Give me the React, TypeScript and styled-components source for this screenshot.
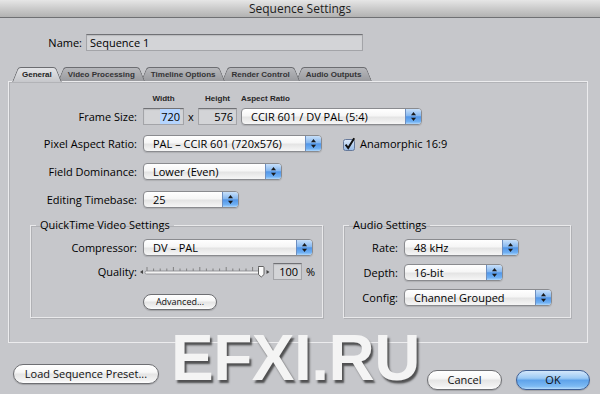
import React from 'react';
import styled, { createGlobalStyle } from 'styled-components';

const GlobalStyle = createGlobalStyle`
  html, body {
    margin: 0;
    padding: 0;
    background: #c6c7cb;
  }
  body {
    font-family: 'Open Sans', 'DejaVu Sans', sans-serif;
    color: #000;
  }
`;

const Window = styled.div`
  position: relative;
  width: 600px;
  height: 394px;
  overflow: hidden;
  background: #c6c7cb;
  display: flex;
  flex-direction: column;
`;

const TitleBar = styled.div`
  flex: none;
  height: 18px;
  box-sizing: border-box;
  border-bottom: 1px solid #6f7073;
  background: linear-gradient(#e6e6e6, #cbcbcb 50%, #b2b2b2);
  display: flex;
  align-items: center;
  justify-content: center;
  font-size: 12px;
  line-height: 17px;
  color: #1c1c1c;
`;

const Body = styled.div`
  display: flex;
  flex-direction: column;
  padding: 16px 10px 0 8px;
`;

const NameRow = styled.div`
  display: flex;
  align-items: center;
  gap: 4px;
  height: 17px;
`;

const Label = styled.div<{ $w: number }>`
  flex: none;
  width: ${p => p.$w}px;
  text-align: right;
  font-size: 11px;
  line-height: 15px;
  white-space: nowrap;
`;

const TextField = styled.div<{ $w: number; $right?: boolean }>`
  flex: none;
  width: ${p => p.$w}px;
  height: 17px;
  box-sizing: border-box;
  border: 1px solid #a3a4a8;
  border-top-color: #707175;
  background: #d3d4d7;
  box-shadow: inset 0 1px 1px rgba(0, 0, 0, 0.12);
  padding: 0 3px;
  font-size: 11px;
  line-height: 15px;
  text-align: ${p => (p.$right ? 'right' : 'left')};
  white-space: nowrap;
  overflow: hidden;
`;

const Selected = styled.span`
  background: #b5d5ff;
  padding-left: 1px;
`;

const TabBar = styled.div`
  position: relative;
  z-index: 1;
  display: flex;
  align-items: flex-start;
  height: 14px;
  margin-top: 16px;
  padding-left: 4px;
`;

const Tab = styled.div<{ $active?: boolean; $z: number }>`
  position: relative;
  z-index: ${p => p.$z};
  height: ${p => (p.$active ? 15 : 14)}px;
  padding: 0 10px;
  margin-right: -4px;
  font: bold 8px/15px 'Liberation Sans', Arial, sans-serif;
  color: ${p => (p.$active ? '#1e1e1e' : '#333335')};
  white-space: nowrap;

  &::before,
  &::after {
    content: '';
    position: absolute;
    top: 0;
    bottom: 0;
    z-index: -1;
    border-top: 1px solid #6c6d71;
    background: ${p =>
      p.$active
        ? 'linear-gradient(#e3e4e7, #c6c7cb)'
        : 'linear-gradient(#b6b7bb, #9a9b9f)'};
  }
  &::before {
    left: 0;
    right: 50%;
    border-left: 1px solid #6c6d71;
    border-top-left-radius: 3px;
    transform-origin: bottom;
    transform: skewX(-22deg);
  }
  &::after {
    left: 50%;
    right: 0;
    border-right: 1px solid #6c6d71;
    border-top-right-radius: 3px;
    transform-origin: bottom;
    transform: skewX(22deg);
  }
`;

const Panel = styled.div`
  width: 580px;
  height: 262px;
  box-sizing: border-box;
  border: 1px solid #ececee;
  box-shadow: inset 1px 1px 0 #b2b3b7;
  display: flex;
  flex-direction: column;
`;

const Row = styled.div<{ $top: number; $gap?: number }>`
  display: flex;
  align-items: center;
  gap: ${p => p.$gap ?? 6}px;
  margin-top: ${p => p.$top}px;
  min-height: 17px;
`;

const ColHead = styled.div<{ $w?: number; $left?: boolean }>`
  flex: none;
  width: ${p => (p.$w ? `${p.$w}px` : 'auto')};
  text-align: ${p => (p.$left ? 'left' : 'center')};
  font: bold 8px/10px 'Liberation Sans', Arial, sans-serif;
  color: #262626;
`;

const HeadRow = styled.div`
  display: flex;
  margin-top: 12px;
  height: 10px;
  padding-left: 134px;
`;

const Times = styled.span`
  flex: none;
  width: 6px;
  margin: 0 4px;
  text-align: center;
  font-size: 11px;
  line-height: 15px;
`;

const Gap = styled.span<{ $w: number }>`
  flex: none;
  width: ${p => p.$w}px;
`;

const PopupBox = styled.div<{ $w: number }>`
  flex: none;
  display: flex;
  width: ${p => p.$w}px;
  height: 17px;
  box-sizing: border-box;
  border: 1px solid #8a8b8f;
  border-radius: 4px;
  overflow: hidden;
  background: linear-gradient(#ffffff, #f6f6f6 45%, #e4e4e4 55%, #f6f6f6);
  box-shadow: 0 1px 1px rgba(0, 0, 0, 0.12);
`;

const PopupText = styled.div`
  flex: 1;
  padding-left: 9px;
  font-size: 11px;
  line-height: 15px;
  white-space: nowrap;
  overflow: hidden;
`;

const PopupArrows = styled.div`
  flex: none;
  width: 15px;
  display: flex;
  align-items: center;
  justify-content: center;
  border-left: 1px solid #6d8ebf;
  background: linear-gradient(#c8e0fa 0%, #86b8f0 45%, #5296e8 52%, #71b1f3 85%, #b1d8fc 100%);
`;

const Check = styled.div`
  display: flex;
  align-items: center;
  gap: 4px;
  margin-left: 15px;
  font-size: 11px;
  line-height: 15px;
`;

const Groups = styled.div`
  display: flex;
  gap: 20px;
  margin-top: 10px;
  padding-left: 21px;
`;

const Group = styled.fieldset<{ $w: number }>`
  width: ${p => p.$w}px;
  height: 100px;
  box-sizing: border-box;
  margin: 0;
  padding: 0;
  min-width: 0;
  border: 1px solid #e9e9eb;
  box-shadow: 1px 1px 0 #b0b1b5, inset 1px 1px 0 #b0b1b5;
`;

const Legend = styled.legend`
  margin-left: 5px;
  padding: 0 4px;
  font-size: 11px;
  line-height: 14px;
`;

const Percent = styled.span`
  font-size: 11px;
  line-height: 15px;
  margin-left: 1px;
`;

const PillButton = styled.div<{ $w: number; $h: number; $primary?: boolean; $small?: boolean }>`
  flex: none;
  width: ${p => p.$w}px;
  height: ${p => p.$h}px;
  box-sizing: border-box;
  border: 1px solid ${p => (p.$primary ? '#3d5f96' : '#6e6f73')};
  border-radius: ${p => p.$h / 2}px;
  background: ${p =>
    p.$primary
      ? 'linear-gradient(#d3e7fb 0%, #9ccaf5 40%, #5fa3ea 52%, #7dbaf3 85%, #b6dcfc 100%)'
      : 'linear-gradient(#ffffff 0%, #f7f7f7 40%, #e5e5e5 52%, #f2f2f2 85%, #ffffff 100%)'};
  box-shadow: 0 1px 1px rgba(0, 0, 0, 0.18);
  display: flex;
  align-items: center;
  justify-content: center;
  font-size: ${p => (p.$small ? 9 : 11)}px;
  line-height: 14px;
  white-space: nowrap;
  color: #111;
`;

const Footer = styled.div`
  display: flex;
  align-items: flex-start;
  margin-top: 21px;
  padding-left: 5px;
`;

const Spacer = styled.div`
  flex: 1;
`;

const DialogButtons = styled.div`
  display: flex;
  gap: 14px;
  margin-top: 6px;
`;

const Watermark = styled.div`
  position: absolute;
  left: 171px;
  top: 326px;
  font: bold 64px/1 'Liberation Sans', Arial, sans-serif;
  letter-spacing: -0.5px;
  color: #f4f4f4;
  text-shadow: 2px 3px 2px rgba(30, 30, 30, 0.7);
  pointer-events: none;
`;

const Arrows = () => (
  <svg width="7" height="11" viewBox="0 0 7 11">
    <path d="M3.5 1 L6 4.3 L1 4.3 Z" fill="#1a1a1a" />
    <path d="M1 6.7 L6 6.7 L3.5 10 Z" fill="#1a1a1a" />
  </svg>
);

const Popup = ({ w, children }: { w: number; children: React.ReactNode }) => (
  <PopupBox $w={w}>
    <PopupText>{children}</PopupText>
    <PopupArrows>
      <Arrows />
    </PopupArrows>
  </PopupBox>
);

const CheckIcon = () => (
  <svg width="13" height="14" viewBox="0 0 13 14">
    <defs>
      <linearGradient id="cbg" x1="0" y1="0" x2="0" y2="1">
        <stop offset="0" stopColor="#dce9f9" />
        <stop offset="1" stopColor="#94b9e6" />
      </linearGradient>
    </defs>
    <rect x="0.5" y="2.5" width="11" height="11" rx="2" fill="url(#cbg)" stroke="#66799a" />
    <path d="M2.6 7.6 L5.2 11 L11.2 1.2" fill="none" stroke="#111" strokeWidth="2" />
  </svg>
);

const ticks = Array.from({ length: 18 }, (_, i) => 7 + i * 6.6);

const Slider = () => (
  <svg width="130" height="17" viewBox="0 0 130 17">
    <path d="M0 9 L3 7 L3 11 Z" fill="#444" />
    {ticks.map((x, i) => (
      <line key={i} x1={x} x2={x} y1={i % 4 === 0 ? 4 : 5.5} y2="8" stroke="#6e6e6e" strokeWidth="0.8" />
    ))}
    <rect x="5" y="8" width="114" height="3" rx="1.5" fill="#f2f2f2" stroke="#85868a" strokeWidth="0.8" />
    <path
      d="M118.5 3.5 h4.5 a1 1 0 0 1 1 1 v7 l-2.75 2.5 l-2.75 -2.5 v-7 a1 1 0 0 1 1 -1 z"
      fill="#fafafa"
      stroke="#555"
      strokeWidth="0.9"
    />
    <path d="M129.5 9 L126.5 7 L126.5 11 Z" fill="#444" />
  </svg>
);

const tabs = ['General', 'Video Processing', 'Timeline Options', 'Render Control', 'Audio Outputs'];

export default function App() {
  return (
    <>
      <GlobalStyle />
      <Window>
        <TitleBar>Sequence Settings</TitleBar>
        <Body>
          <NameRow>
            <Label $w={74}>Name:</Label>
            <TextField $w={277}>Sequence 1</TextField>
          </NameRow>

          <TabBar>
            {tabs.map((t, i) => (
              <Tab key={t} $active={i === 0} $z={10 - i}>
                {t}
              </Tab>
            ))}
          </TabBar>

          <Panel>
            <HeadRow>
              <ColHead $w={41}>Width</ColHead>
              <ColHead $w={14} />
              <ColHead $w={39}>Height</ColHead>
              <ColHead $w={4} />
              <ColHead $left>Aspect Ratio</ColHead>
            </HeadRow>

            <Row $top={4} $gap={0}>
              <Label $w={128}>Frame Size:</Label>
              <Gap $w={6} />
              <TextField $w={41} $right>
                <Selected>720</Selected>
              </TextField>
              <Times>x</Times>
              <TextField $w={39} $right>576</TextField>
              <Gap $w={4} />
              <Popup w={181}>CCIR 601 / DV PAL (5:4)</Popup>
            </Row>

            <Row $top={10}>
              <Label $w={128}>Pixel Aspect Ratio:</Label>
              <Popup w={179}>PAL – CCIR 601 (720x576)</Popup>
              <Check>
                <CheckIcon />
                Anamorphic 16:9
              </Check>
            </Row>

            <Row $top={11}>
              <Label $w={128}>Field Dominance:</Label>
              <Popup w={139}>Lower (Even)</Popup>
            </Row>

            <Row $top={11}>
              <Label $w={128}>Editing Timebase:</Label>
              <Popup w={96}>25</Popup>
            </Row>

            <Groups>
              <Group $w={293}>
                <Legend>QuickTime Video Settings</Legend>
                <Row $top={7}>
                  <Label $w={106}>Compressor:</Label>
                  <Popup w={170}>DV – PAL</Popup>
                </Row>
                <Row $top={7} $gap={3}>
                  <Label $w={106}>Quality:</Label>
                  <Slider />
                  <TextField $w={29} $right>100</TextField>
                  <Percent>%</Percent>
                </Row>
                <Row $top={13}>
                  <Label $w={106} />
                  <PillButton $w={74} $h={16} $small>Advanced...</PillButton>
                </Row>
              </Group>

              <Group $w={228}>
                <Legend>Audio Settings</Legend>
                <Row $top={7}>
                  <Label $w={54}>Rate:</Label>
                  <Popup w={115}>48 kHz</Popup>
                </Row>
                <Row $top={8}>
                  <Label $w={54}>Depth:</Label>
                  <Popup w={99}>16-bit</Popup>
                </Row>
                <Row $top={8}>
                  <Label $w={54}>Config:</Label>
                  <Popup w={148}>Channel Grouped</Popup>
                </Row>
              </Group>
            </Groups>
          </Panel>

          <Footer>
            <PillButton $w={146} $h={20}>Load Sequence Preset...</PillButton>
            <Spacer />
            <DialogButtons>
              <PillButton $w={75} $h={20}>Cancel</PillButton>
              <PillButton $w={74} $h={20} $primary>OK</PillButton>
            </DialogButtons>
          </Footer>
        </Body>
        <Watermark>EFXI.RU</Watermark>
      </Window>
    </>
  );
}
